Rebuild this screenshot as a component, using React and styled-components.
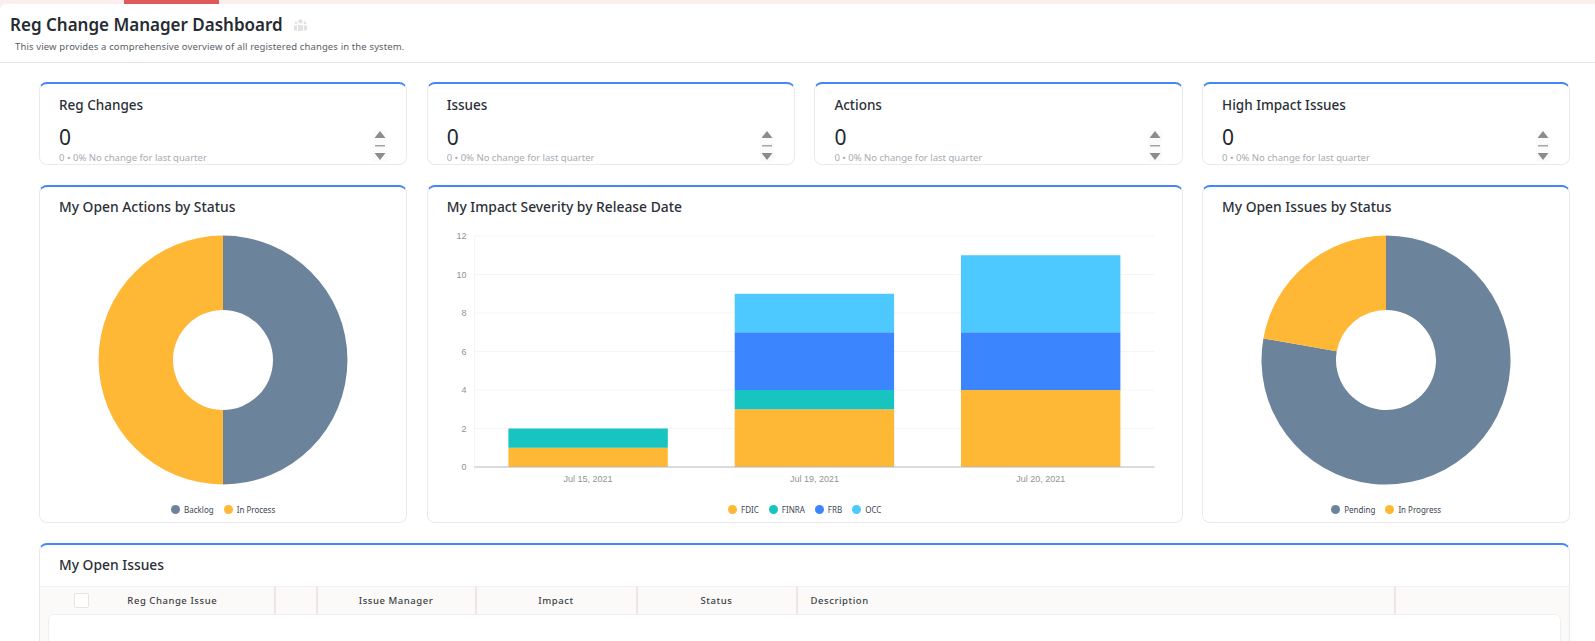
import styled, { createGlobalStyle } from "styled-components";

const GlobalStyle = createGlobalStyle`
  html, body {
    margin: 0;
    padding: 0;
    height: 100%;
    background: #fff;
    overflow: hidden;
    font-family: "Noto Sans", "Open Sans", sans-serif;
    color: #2b3038;
  }
`;

const colors = {
  slate: "#6b849c",
  amber: "#ffb736",
  teal: "#17c4c0",
  blue: "#3b85ff",
  sky: "#4dc9ff",
};

const Page = styled.div`
  width: 1595px;
  height: 641px;
  overflow: hidden;
  background: #fdeeee;
`;

const LoadBar = styled.div`
  height: 4px;
  display: flex;
`;

const LoadSegment = styled.div`
  width: 95px;
  margin-left: 124px;
  background: #e05a5c;
`;

const Surface = styled.div`
  background: #fff;
  border-top-left-radius: 6px;
  height: 637px;
`;

const Header = styled.header`
  height: 58px;
  border-bottom: 1px solid #e4e4e6;
  padding: 0 10px;
`;

const TitleRow = styled.div`
  display: flex;
  align-items: center;
  gap: 11px;
  padding-top: 8px;
`;

const Title = styled.h1`
  margin: 0;
  font-size: 17px;
  line-height: 25px;
  font-weight: 600;
  color: #262b31;
`;

const Subtitle = styled.p`
  margin: 3px 0 0 5px;
  font-size: 9.5px;
  line-height: 13px;
  letter-spacing: 0.13px;
  color: #5a6068;
`;

const Content = styled.main`
  padding: 19px 26px 0 39px;
  display: flex;
  flex-direction: column;
  gap: 20px;
`;

const Grid = styled.div`
  display: grid;
  grid-template-columns: repeat(4, 368.3px);
  column-gap: 19.4px;
`;

const Card = styled.section`
  box-sizing: border-box;
  height: ${(p) => p.$height}px;
  grid-column: span ${(p) => p.$span || 1};
  border: 1px solid #e9eaee;
  border-top: 2px solid #4287f5;
  border-radius: 8px;
  padding: 0 19px;
  overflow: hidden;
  display: flex;
  flex-direction: column;
  background: #fff;
`;

const CardTitle = styled.h2`
  margin: 12px 0 0;
  font-size: 13.5px;
  line-height: 19px;
  font-weight: 500;
  color: #2b3038;
`;

const ChartTitle = styled(CardTitle)`
  margin-top: 10px;
  font-size: 13.85px;
`;

const StatBody = styled.div`
  display: flex;
  justify-content: space-between;
  align-items: flex-start;
  margin-top: 8px;
`;

const StatValue = styled.div`
  font-size: 21px;
  line-height: 28px;
  color: #23272e;
`;

const StatNote = styled.div`
  font-size: 9.5px;
  line-height: 13px;
  color: #a8abb0;
  white-space: nowrap;
`;

const Stepper = styled.svg`
  display: block;
  margin: 7px 0.5px 0 0;
  flex: none;
  background: #fbfbfb;
`;

const ChartBody = styled.div`
  flex: 1;
  display: flex;
  justify-content: center;
  padding-top: 19px;
`;

const BarChartBody = styled.div`
  flex: 1;
  margin: 13px -19px 0;
`;

const Legend = styled.div`
  display: flex;
  justify-content: center;
  gap: 10px;
  height: 17px;
  flex: none;
  align-items: flex-start;
`;

const LegendItem = styled.div`
  display: flex;
  align-items: center;
  gap: 4px;
  font-size: 8px;
  line-height: 10px;
  color: #3c4652;
`;

const Dot = styled.span`
  width: 9px;
  height: 9px;
  border-radius: 50%;
  background: ${(p) => p.$color};
`;

const AxisText = styled.text`
  font-family: "Liberation Sans", Arial, sans-serif;
  font-size: 9px;
  fill: #929292;
`;

const TableHead = styled.div`
  margin: 12.5px -19px 0;
  flex: none;
  box-sizing: border-box;
  height: 28px;
  background: #fcfaf9;
  border-top: 1px solid #f2f1f1;
  display: grid;
  grid-template-columns: 235.5px 42px 159px 161px 160px 598px 1fr;
`;

const HeadCell = styled.div`
  position: relative;
  display: flex;
  align-items: center;
  justify-content: ${(p) => (p.$left ? "flex-start" : "center")};
  padding-left: ${(p) => (p.$left ? "13px" : "0")};
  border-right: ${(p) => (p.$last ? "none" : "2px solid #eee6e5")};
  font-size: 9.5px;
  font-weight: 500;
  letter-spacing: 0.55px;
  color: #3a3f46;
`;

const HeadLabel = styled.span`
  margin-left: 31px;
`;

const Checkbox = styled.span`
  position: absolute;
  left: 34px;
  top: 6px;
  width: 13px;
  height: 13px;
  background: #fff;
  border: 1px solid #e5e3e3;
  border-radius: 2px;
`;

const TableArea = styled.div`
  margin: 0 -19px;
  flex: none;
  background: #fcfaf9;
  padding: 0 8px;
`;

const EmptyPanel = styled.div`
  height: 60px;
  background: #fff;
  border: 1px solid #eeeef5;
  border-radius: 6px;
`;

const ChartSvg = styled.svg`
  display: block;
`;

const polar = (cx, cy, r, deg) => {
  const a = ((deg - 90) * Math.PI) / 180;
  return [cx + r * Math.cos(a), cy + r * Math.sin(a)];
};

function Donut({ slices }) {
  const size = 250;
  const c = size / 2;
  const outer = 124.5;
  const inner = 50;
  let start = 0;
  return (
    <svg width={size} height={size} viewBox={`0 0 ${size} ${size}`}>
      {slices.map((s) => {
        const end = start + s.deg;
        const [x1, y1] = polar(c, c, outer, start);
        const [x2, y2] = polar(c, c, outer, end);
        const [x3, y3] = polar(c, c, inner, end);
        const [x4, y4] = polar(c, c, inner, start);
        const large = s.deg > 180 ? 1 : 0;
        const d = `M${x1} ${y1}A${outer} ${outer} 0 ${large} 1 ${x2} ${y2}L${x3} ${y3}A${inner} ${inner} 0 ${large} 0 ${x4} ${y4}Z`;
        start = end;
        return <path key={s.color} d={d} fill={s.color} />;
      })}
    </svg>
  );
}

// y of value 0 and the height of one unit, in the chart's own coordinates
const BASE = 238;
const UNIT = 19.25;
const LEFT = 46.5;
const RIGHT = 726.5;

const bars = [
  { x: 80.4, label: "Jul 15, 2021", parts: [[colors.amber, 1], [colors.teal, 1]] },
  { x: 306.7, label: "Jul 19, 2021", parts: [[colors.amber, 3], [colors.teal, 1], [colors.blue, 3], [colors.sky, 2]] },
  { x: 533, label: "Jul 20, 2021", parts: [[colors.amber, 4], [colors.blue, 3], [colors.sky, 4]] },
];

function BarChart() {
  return (
    <ChartSvg width="741" height="260" viewBox="0 0 741 260">
      {[0, 2, 4, 6, 8, 10, 12].map((v) => {
        const y = BASE - v * UNIT;
        return (
          <g key={v}>
            {v > 0 && <line x1={LEFT} x2={RIGHT} y1={y} y2={y} stroke="#f4f4f5" />}
            <AxisText x={LEFT - 8} y={y + 3} textAnchor="end">{v}</AxisText>
          </g>
        );
      })}
      <line x1={LEFT} x2={LEFT} y1={BASE - 12 * UNIT} y2={BASE + 4} stroke="#f4f4f5" />
      {bars.map((b) => {
        let top = BASE;
        return (
          <g key={b.label}>
            {b.parts.map(([color, n]) => {
              top -= n * UNIT;
              return <rect key={color} x={b.x} y={top} width="159.4" height={n * UNIT} fill={color} />;
            })}
            <AxisText x={b.x + 79.7} y={BASE + 15} textAnchor="middle">{b.label}</AxisText>
          </g>
        );
      })}
      <line x1={LEFT} x2={RIGHT} y1={BASE} y2={BASE} stroke="#b4b6ba" />
    </ChartSvg>
  );
}

const stats = ["Reg Changes", "Issues", "Actions", "High Impact Issues"];

function StatCard({ title }) {
  return (
    <Card $height={82.5}>
      <CardTitle>{title}</CardTitle>
      <StatBody>
        <div>
          <StatValue>0</StatValue>
          <StatNote>0 • 0% No change for last quarter</StatNote>
        </div>
        <Stepper width="14" height="32" viewBox="0 0 14 32">
          <path d="M7 1 L12.5 8 H1.5 Z" fill="#8c8c8c" />
          <rect x="2" y="15" width="10" height="1.5" fill="#a5a5a5" />
          <path d="M1.5 23 H12.5 L7 30 Z" fill="#8c8c8c" />
        </Stepper>
      </StatBody>
    </Card>
  );
}

export default function App() {
  return (
    <Page>
      <GlobalStyle />
      <LoadBar>
        <LoadSegment />
      </LoadBar>
      <Surface>
        <Header>
          <TitleRow>
            <Title>Reg Change Manager Dashboard</Title>
            <svg width="13" height="12" viewBox="0 0 13 12" fill="#e2e2e2">
              <circle cx="6.5" cy="2.4" r="2.2" />
              <circle cx="2" cy="4" r="1.4" />
              <circle cx="11" cy="4" r="1.4" />
              <path d="M3.8 6h5.4v6H3.8zM0 6.5h3v5H0zM10 6.5h3v5h-3z" />
            </svg>
          </TitleRow>
          <Subtitle>This view provides a comprehensive overview of all registered changes in the system.</Subtitle>
        </Header>
        <Content>
          <Grid>
            {stats.map((s) => (
              <StatCard key={s} title={s} />
            ))}
          </Grid>
          <Grid>
            <Card $height={338}>
              <ChartTitle>My Open Actions by Status</ChartTitle>
              <ChartBody>
                <Donut slices={[{ color: colors.slate, deg: 180 }, { color: colors.amber, deg: 180 }]} />
              </ChartBody>
              <Legend>
                <LegendItem><Dot $color={colors.slate} />Backlog</LegendItem>
                <LegendItem><Dot $color={colors.amber} />In Process</LegendItem>
              </Legend>
            </Card>
            <Card $height={338} $span={2}>
              <ChartTitle>My Impact Severity by Release Date</ChartTitle>
              <BarChartBody>
                <BarChart />
              </BarChartBody>
              <Legend>
                <LegendItem><Dot $color={colors.amber} />FDIC</LegendItem>
                <LegendItem><Dot $color={colors.teal} />FINRA</LegendItem>
                <LegendItem><Dot $color={colors.blue} />FRB</LegendItem>
                <LegendItem><Dot $color={colors.sky} />OCC</LegendItem>
              </Legend>
            </Card>
            <Card $height={338}>
              <ChartTitle>My Open Issues by Status</ChartTitle>
              <ChartBody>
                <Donut slices={[{ color: colors.slate, deg: 280 }, { color: colors.amber, deg: 80 }]} />
              </ChartBody>
              <Legend>
                <LegendItem><Dot $color={colors.slate} />Pending</LegendItem>
                <LegendItem><Dot $color={colors.amber} />In Progress</LegendItem>
              </Legend>
            </Card>
          </Grid>
          <Grid>
            <Card $height={130} $span={4}>
              <ChartTitle>My Open Issues</ChartTitle>
              <TableHead>
                <HeadCell>
                  <Checkbox />
                  <HeadLabel>Reg Change Issue</HeadLabel>
                </HeadCell>
                <HeadCell />
                <HeadCell>Issue Manager</HeadCell>
                <HeadCell>Impact</HeadCell>
                <HeadCell>Status</HeadCell>
                <HeadCell $left>Description</HeadCell>
                <HeadCell $last />
              </TableHead>
              <TableArea>
                <EmptyPanel />
              </TableArea>
            </Card>
          </Grid>
        </Content>
      </Surface>
    </Page>
  );
}
